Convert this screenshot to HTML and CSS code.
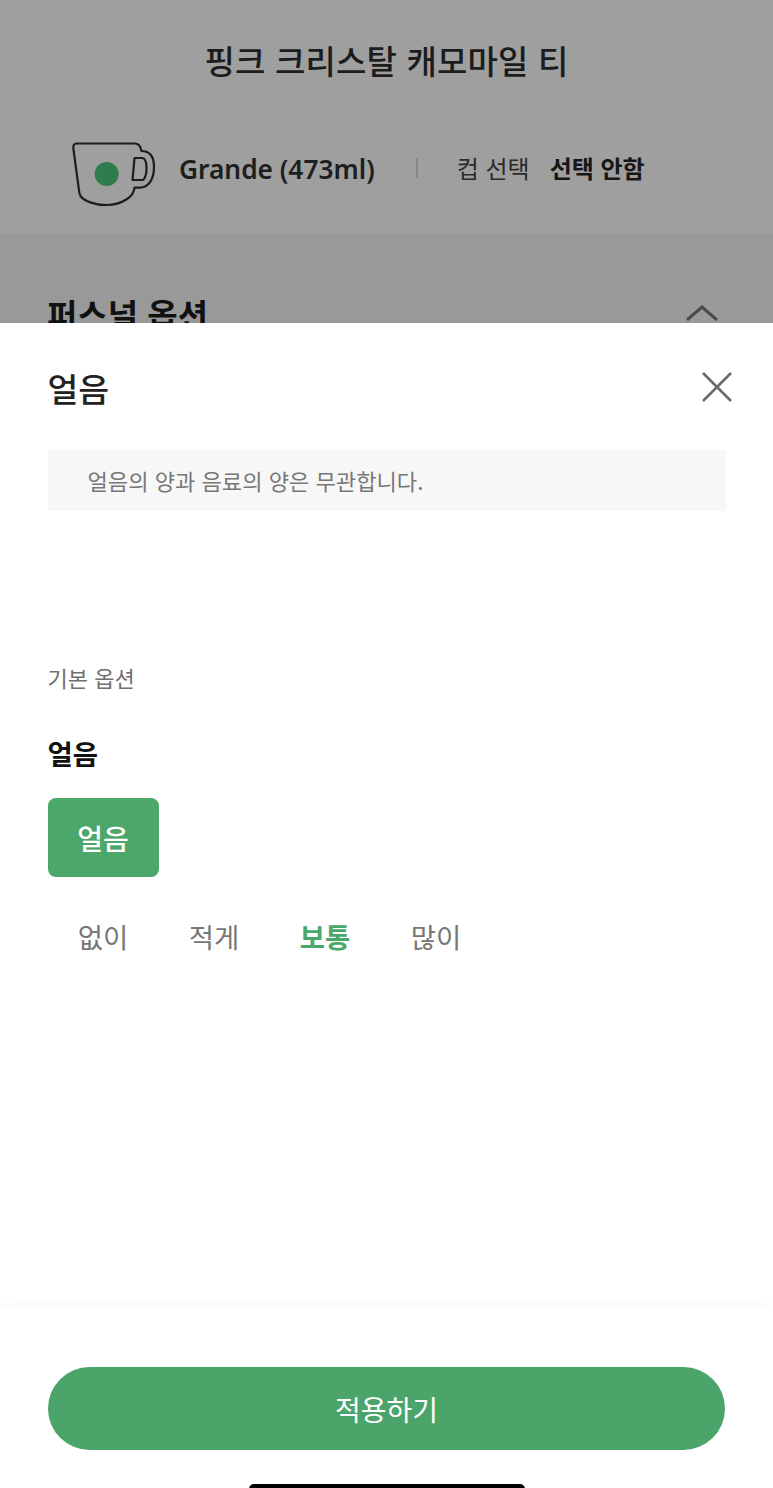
FILE: index.html
```html
<!DOCTYPE html>
<html lang="ko">
<head>
<meta charset="utf-8">
<title>얼음</title>
<link rel="stylesheet" href="styles.css">
</head>
<body>
<div class="screen">
  <div class="backdrop">
    <div class="summary">
      <h1 class="drink-title">핑크 크리스탈 캐모마일 티</h1>
      <div class="size-row">
        <svg class="mug" viewBox="0 0 84 66" width="84" height="66" aria-hidden="true">
          <path d="M4.5 1.5H63C66 1.5 68.5 4 69.5 9C77 9 82 13 82 25C82 38 76 45.7 68 45.7H62.5C62 50 60 54 55 57C49 61 42 63 34.5 63C22 63 12 59 8.5 54C7.5 52 7 50 6.8 47L1.3 6C1.2 3 2.5 1.5 4.5 1.5Z" fill="none" stroke="#1d1d1d" stroke-width="2.2" stroke-linejoin="round"/>
          <path d="M62.5 16H70.5C73.5 16.5 74.5 21 74.5 26C74.5 31 73.5 36 71 38H60.5Z" fill="none" stroke="#1d1d1d" stroke-width="2.2" stroke-linejoin="round"/>
          <circle cx="34.7" cy="32" r="12" fill="#2f7c4d"/>
        </svg>
        <span class="size-name">Grande (473ml)</span>
        <span class="size-divider"></span>
        <span class="cup-label">컵 선택</span>
        <span class="cup-value">선택 안함</span>
      </div>
    </div>
    <div class="personal">
      <h2 class="personal-title">퍼스널 옵션</h2>
      <svg class="chevron" viewBox="0 0 34 16" width="34" height="16" aria-hidden="true">
        <path d="M2 15L17 2L32 15" fill="none" stroke="#4a4a4a" stroke-width="3"/>
      </svg>
    </div>
  </div>
  <div class="sheet">
    <div class="sheet-head">
      <h2 class="sheet-title">얼음</h2>
      <svg class="close" viewBox="0 0 32 32" width="32" height="32" aria-hidden="true">
        <path d="M2 2L30 30M30 2L2 30" fill="none" stroke="#6b6b6b" stroke-width="2.6"/>
      </svg>
    </div>
    <p class="notice">얼음의 양과 음료의 양은 무관합니다.</p>
    <p class="group-label">기본 옵션</p>
    <h3 class="option-title">얼음</h3>
    <div class="chip">얼음</div>
    <div class="levels">
      <span class="level">없이</span>
      <span class="level">적게</span>
      <span class="level is-active">보통</span>
      <span class="level">많이</span>
    </div>
    <div class="footer">
      <button class="apply" type="button">적용하기</button>
      <div class="home-bar"></div>
    </div>
  </div>
</div>
</body>
</html>
```
FILE: styles.css
```css
* { box-sizing: border-box; }
html, body { margin: 0; padding: 0; background: #fff; }
body { font-family: "Noto Sans CJK KR", "Noto Sans", sans-serif; }
h1, h2, h3, p { margin: 0; font-weight: 400; }

.screen { width: 773px; height: 1488px; overflow: hidden; display: flex; flex-direction: column; }

.backdrop { height: 323px; flex: none; overflow: hidden; background: #999; }
.summary { height: 234px; background: #9f9f9f; padding-top: 35px; }
.drink-title { font-size: 33px; line-height: 50px; font-weight: 500; letter-spacing: .15px; color: #1c1c1c; text-align: center; }
.size-row { display: flex; align-items: center; margin-top: 50px; padding-left: 72px; height: 66px; }
.mug { flex: none; overflow: visible; margin-top: 14px; }
.size-name { margin-left: 23px; margin-top: 2px; font-family: "Noto Sans", sans-serif; font-size: 26.3px; font-weight: 600; color: #1e1e1e; white-space: nowrap; }
.size-divider { width: 2px; height: 20px; background: #888; margin-left: 41px; }
.cup-label { margin-left: 39px; margin-top: -2px; font-size: 24px; color: #2b2b2b; white-space: nowrap; }
.cup-value { margin-left: 20px; margin-top: -2px; font-size: 24px; font-weight: 700; color: #161616; white-space: nowrap; }
.personal { display: flex; justify-content: space-between; align-items: flex-start; padding: 60px 54px 0 47px; }
.personal-title { font-size: 33px; line-height: 44px; font-weight: 700; color: #111; margin-top: -2px; }
.chevron { margin-top: 11px; flex: none; }

.sheet { flex: 1; background: #fff; display: flex; flex-direction: column; padding: 0 48px 0 47.5px; min-height: 0; }
.sheet-head { display: flex; justify-content: space-between; align-items: center; height: 127px; margin-right: -8px; }
.sheet-title { font-size: 33.5px; font-weight: 500; color: #222; line-height: 50px; margin-top: 2px; }
.close { flex: none; }
.notice { height: 61px; line-height: 61px; width: 678px; background: #f7f7f7; padding-left: 40px; font-size: 22.1px; color: #777; }
.group-label { margin-top: 150px; font-size: 22px; line-height: 32px; color: #6f6f6f; }
.option-title { margin-top: 40px; font-size: 27.5px; line-height: 40px; font-weight: 700; color: #111; }
.chip { margin-top: 25px; width: 111px; height: 79px; border-radius: 8px; background: #4ba76a; color: #fff; font-size: 28px; font-weight: 500; display: flex; align-items: center; justify-content: center; }
.levels { display: flex; margin-top: 38px; }
.level { width: 111px; text-align: center; font-size: 27.5px; line-height: 42px; color: #777; }
.is-active { color: #4ba76a; font-weight: 700; }

.footer { margin: auto -48px 0 -47.5px; height: 181px; padding: 60px 48px 0; box-shadow: 0 -8px 12px -4px rgba(0,0,0,.03); display: flex; flex-direction: column; align-items: center; }
.apply { width: 677px; height: 83px; flex: none; border: 0; border-radius: 42px; background: #4ba56a; color: #fff; font-family: inherit; font-size: 28px; font-weight: 400; }
.home-bar { width: 276px; height: 10px; margin-top: 34px; background: #000; border-radius: 5px 5px 0 0; flex: none; }
```
